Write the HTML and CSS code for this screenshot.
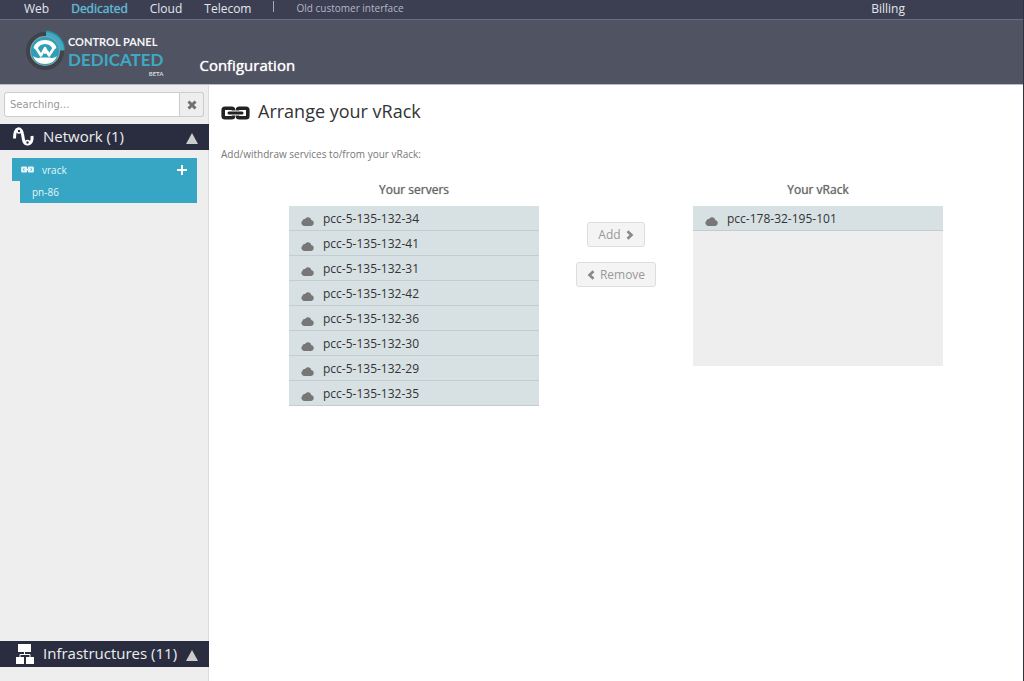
FILE: index.html
```html
<!DOCTYPE html>
<html lang="en">
<head>
<meta charset="utf-8">
<title>Control Panel Dedicated</title>
<link rel="stylesheet" href="styles.css">
</head>
<body>
<svg class="sprite" aria-hidden="true">
  <symbol id="chain" viewBox="0 0 29 14">
    <path d="M12.500 4.500V4Q12.500 2.200 10.700 2.200H4Q2.200 2.200 2.200 4V10Q2.200 11.800 4 11.800H10.700Q12.500 11.800 12.500 10V9.500M16.500 4.500V4Q16.500 2.200 18.300 2.200H25Q26.800 2.200 26.800 4V10Q26.800 11.800 25 11.800H18.300Q16.500 11.800 16.500 10V9.500" fill="none" stroke="currentColor" stroke-width="3.600"/>
    <path d="M8 7H21" stroke="currentColor" stroke-width="3" stroke-linecap="round"/>
  </symbol>
  <symbol id="chain-mini" viewBox="0 0 13 7">
    <path d="M1.200 1.500H5V5.500H1.200ZM8 1.500H11.800V5.500H8Z" fill="none" stroke="currentColor" stroke-width="2.200" stroke-linejoin="round"/>
    <path d="M3 3.500H10" stroke="currentColor" stroke-width="1.400"/>
  </symbol>
  <symbol id="cloud" viewBox="0 0 13 9">
    <path d="M3 9A3 3 0 0 1 1.500 3.700A2 2 0 0 1 4 2.100A3.400 3.400 0 0 1 10.300 2.900A3.100 3.100 0 0 1 10.200 9Z" fill="currentColor"/>
  </symbol>
  <symbol id="chevron" viewBox="0 0 8 10">
    <path d="M1.500 1.200L5.500 5L1.500 8.800" fill="none" stroke="currentColor" stroke-width="2.600"/>
  </symbol>
</svg>
<header>
  <nav class="topbar">
    <a href="#">Web</a>
    <a href="#" class="active">Dedicated</a>
    <a href="#">Cloud</a>
    <a href="#">Telecom</a>
    <span class="separator"></span>
    <a href="#" class="legacy">Old customer interface</a>
    <a href="#" class="billing">Billing</a>
  </nav>
  <div class="banner">
    <a href="#" class="logo">
      <svg class="emblem" viewBox="0 0 44 44" aria-hidden="true">
        <circle cx="21" cy="23" r="16.500" fill="none" stroke="#3f434a" stroke-width="5"/>
        <path d="M22 3.500A19 19 0 0 1 40 22" fill="none" stroke="#2b8fa6" stroke-width="2"/>
        <path d="M22 6.500A16.500 16.500 0 0 1 37.500 22.500" fill="none" stroke="#3fabc2" stroke-width="5"/>
        <circle cx="21" cy="23" r="15" fill="#8fa3a9"/>
        <circle cx="21" cy="23" r="14" fill="#2d9fb6"/>
        <path d="M9.500 20Q12 12 21 12Q30 12 32.500 20L29 22Q27 16 21 16Q15 16 13 22Z" fill="#fff"/>
        <path d="M11.500 19L17 27.500L21 20L25 27.500L30.500 19M20 24.500H25" fill="none" stroke="#fff" stroke-width="2.600" stroke-linejoin="round"/>
        <path d="M9 28Q13 31 16 29.500H26Q29 31 33 28Q30 36 21 36Q12 36 9 28Z" fill="#fff"/>
      </svg>
      <span class="wordmark">
        <span class="line-one">CONTROL PANEL</span>
        <span class="line-two">DEDICATED</span>
        <span class="beta">BETA</span>
      </span>
    </a>
    <a href="#" class="section">Configuration</a>
  </div>
</header>
<div class="layout">
  <aside>
    <form class="search">
      <input type="text" placeholder="Searching..." aria-label="Search">
      <button type="button" aria-label="Clear search">
        <svg width="10" height="10" viewBox="0 0 10 10" aria-hidden="true"><path d="M1.500 1.500L8.500 8.500M8.500 1.500L1.500 8.500" stroke="#707070" stroke-width="3"/></svg>
      </button>
    </form>
    <button class="group" type="button">
      <svg width="24" height="22" viewBox="0 0 24 22" aria-hidden="true">
        <path d="M3.500 12.500C3.500 0 10.500 1 11.500 8C12.500 14 12.500 18 16.500 18C20.500 18 21.500 14 21 10" fill="none" stroke="#fff" stroke-width="3"/>
        <circle cx="8" cy="5" r="2" fill="#2a2d40" stroke="#fff" stroke-width="1.600"/>
        <circle cx="16.500" cy="16.500" r="2" fill="#2a2d40" stroke="#fff" stroke-width="1.600"/>
      </svg>
      <span>Network (1)</span>
      <i class="arrow"></i>
    </button>
    <ul class="tree">
      <li class="parent"><svg class="chain-small" aria-hidden="true"><use href="#chain-mini"/></svg><a href="#">vrack</a>
        <button type="button" aria-label="Add a vrack"><svg width="12" height="12" viewBox="0 0 12 12" aria-hidden="true"><path d="M6 1V11M1 6H11" stroke="#fff" stroke-width="2"/></svg></button></li>
      <li class="child"><a href="#">pn-86</a></li>
    </ul>
    <button class="group last" type="button">
      <svg width="24" height="22" viewBox="0 0 24 22" aria-hidden="true">
        <path d="M7 1H20V9H7ZM5 14H13V21H5ZM15 14H23V21H15Z" fill="#fff"/>
        <path d="M13.500 9V11.500M9 14V11.500H19V14" fill="none" stroke="#fff" stroke-width="1"/>
      </svg>
      <span>Infrastructures (11)</span>
      <i class="arrow"></i>
    </button>
  </aside>
  <main>
    <h1><svg class="chain-large" aria-hidden="true"><use href="#chain"/></svg>Arrange your vRack</h1>
    <p>Add/withdraw services to/from your vRack:</p>
    <div class="picker">
      <section>
        <h2>Your servers</h2>
        <ul class="list">
          <li><svg aria-hidden="true"><use href="#cloud"/></svg>pcc-5-135-132-34</li>
          <li><svg aria-hidden="true"><use href="#cloud"/></svg>pcc-5-135-132-41</li>
          <li><svg aria-hidden="true"><use href="#cloud"/></svg>pcc-5-135-132-31</li>
          <li><svg aria-hidden="true"><use href="#cloud"/></svg>pcc-5-135-132-42</li>
          <li><svg aria-hidden="true"><use href="#cloud"/></svg>pcc-5-135-132-36</li>
          <li><svg aria-hidden="true"><use href="#cloud"/></svg>pcc-5-135-132-30</li>
          <li><svg aria-hidden="true"><use href="#cloud"/></svg>pcc-5-135-132-29</li>
          <li><svg aria-hidden="true"><use href="#cloud"/></svg>pcc-5-135-132-35</li>
        </ul>
      </section>
      <div class="actions">
        <button type="button" disabled>Add <svg aria-hidden="true"><use href="#chevron"/></svg></button>
        <button type="button" disabled><svg class="flip" aria-hidden="true"><use href="#chevron"/></svg> Remove</button>
      </div>
      <section>
        <h2>Your vRack</h2>
        <ul class="list">
          <li><svg aria-hidden="true"><use href="#cloud"/></svg>pcc-178-32-195-101</li>
        </ul>
      </section>
    </div>
  </main>
</div>
</body>
</html>
```
FILE: styles.css
```css
* { box-sizing: border-box; }
body {
  margin: 0;
  min-height: 100vh;
  display: flex;
  flex-direction: column;
  border-right: 1px solid #30333c;
  background: #fff;
  color: #333;
  font-family: "Open Sans", "Noto Sans", sans-serif;
  font-size: 12px;
}
a { color: inherit; text-decoration: none; }
ul { margin: 0; padding: 0; list-style: none; }
button { font-family: inherit; cursor: pointer; }
.sprite { display: none; }

.topbar {
  display: flex;
  gap: 22px;
  height: 20px;
  padding: 0 118px 0 24px;
  border-bottom: 1px solid #6a6e80;
  background: #3c3f52;
  color: #e4e6ee;
  line-height: 17px;
}
.topbar .active { color: #62b8d2; text-shadow: 0 0 1px #62b8d2; }
.topbar .separator { width: 1px; height: 11px; margin-top: 1px; background: #a5a8b5; }
.topbar .legacy { color: #b4b7c5; font-size: 10px; }
.topbar .billing { margin-left: auto; }

.banner {
  display: flex;
  height: 65px;
  padding: 8px 0 0 24px;
  gap: 36px;
  border-bottom: 1px solid #b8bac8;
  background: #505462;
}
.logo { display: flex; }
.emblem { width: 44px; height: 44px; }
.wordmark {
  display: flex;
  flex-direction: column;
  padding-top: 6px;
  font-family: Lato, "Open Sans", sans-serif;
  font-weight: 700;
}
.line-one { color: #f4f5f7; font-size: 11px; line-height: 16px; }
.line-two { color: #3ea9c4; font-size: 17px; line-height: 20px; }
.beta { align-self: flex-end; color: #d8dadf; font-size: 6px; line-height: 8px; }
.section {
  padding-top: 25px;
  color: #fff;
  font-size: 15px;
  line-height: 24px;
  text-shadow: 0 0 1px #fff;
}

.layout { display: flex; flex: 1; }
aside {
  display: flex;
  flex-direction: column;
  width: 209px;
  padding: 7px 0 14px;
  border-right: 1px solid #dcdcdc;
  background: #eee;
}
.search { display: flex; margin: 0 4px 7px; }
.search input {
  flex: 1;
  min-width: 0;
  height: 25px;
  padding: 0 5px;
  border: 1px solid #ccc;
  border-radius: 3px 0 0 3px;
  background: #fff;
  font-family: "DejaVu Sans", sans-serif;
  font-size: 10px;
}
.search input::placeholder { color: #999; }
.search button {
  display: grid;
  place-items: center;
  width: 24px;
  padding: 0;
  border: 1px solid #ccc;
  border-left: 0;
  border-radius: 0 3px 3px 0;
  background: #eee;
}
.group {
  display: flex;
  align-items: center;
  gap: 8px;
  height: 26px;
  margin-right: -1px;
  padding: 0 11px;
  border: 0;
  background: #2a2d40;
  color: #eee;
  font-size: 15px;
}
.group span { line-height: 24px; padding-bottom: 2px; }
.group.last { margin-top: auto; }
.arrow {
  margin: 3px 0 0 auto;
  border: 6px solid transparent;
  border-top: 0;
  border-bottom: 11px solid #ccc;
}
.tree { padding: 8px 11px 0 12px; color: #e6f5f9; font-size: 10px; }
.tree li { background: #37a6c4; }
.parent { display: flex; align-items: center; height: 23px; padding: 0 9px; }
.parent button { display: grid; margin-left: auto; padding: 0; border: 0; background: none; }
.chain-small { width: 13px; height: 7px; margin-right: 8px; }
.child { height: 22px; margin-left: 8px; padding-left: 12px; line-height: 22px; }

main { flex: 1; padding: 13px 12px; }
h1 {
  display: flex;
  align-items: center;
  gap: 8px;
  margin: 0;
  font-size: 18px;
  font-weight: 400;
  line-height: 26px;
}
.chain-large { width: 29px; height: 14px; margin-top: 4px; color: #222; }
main p { margin: 21px 0 18px; color: #777; font-size: 10px; line-height: 18px; }
.picker {
  display: grid;
  grid-template-columns: 250px 154px 250px;
  justify-content: center;
}
.picker section { display: flex; flex-direction: column; }
h2 {
  margin: 0 0 7px;
  color: #666;
  font-size: 12px;
  font-weight: 400;
  line-height: 18px;
  text-align: center;
  text-shadow: 0 0 1px #888;
}
.list { min-height: 160px; background: #eee; }
.list li {
  display: flex;
  align-items: center;
  gap: 9px;
  height: 25px;
  padding-left: 12px;
  border-bottom: 1px solid #c3cdd0;
  background: #d7e0e3;
}
.list svg { width: 13px; height: 9px; margin-top: 6px; color: #777; }
.actions { display: flex; flex-direction: column; align-items: center; gap: 15px; padding-top: 41px; }
.actions button {
  display: flex;
  align-items: center;
  gap: 5px;
  height: 25px;
  padding: 0 10px;
  border: 1px solid #ddd;
  border-radius: 3px;
  background: #f4f4f4;
  color: #999;
  font-size: 12px;
}
.actions svg { width: 8px; height: 10px; color: #888; }
.actions .flip { transform: scaleX(-1); }
```
